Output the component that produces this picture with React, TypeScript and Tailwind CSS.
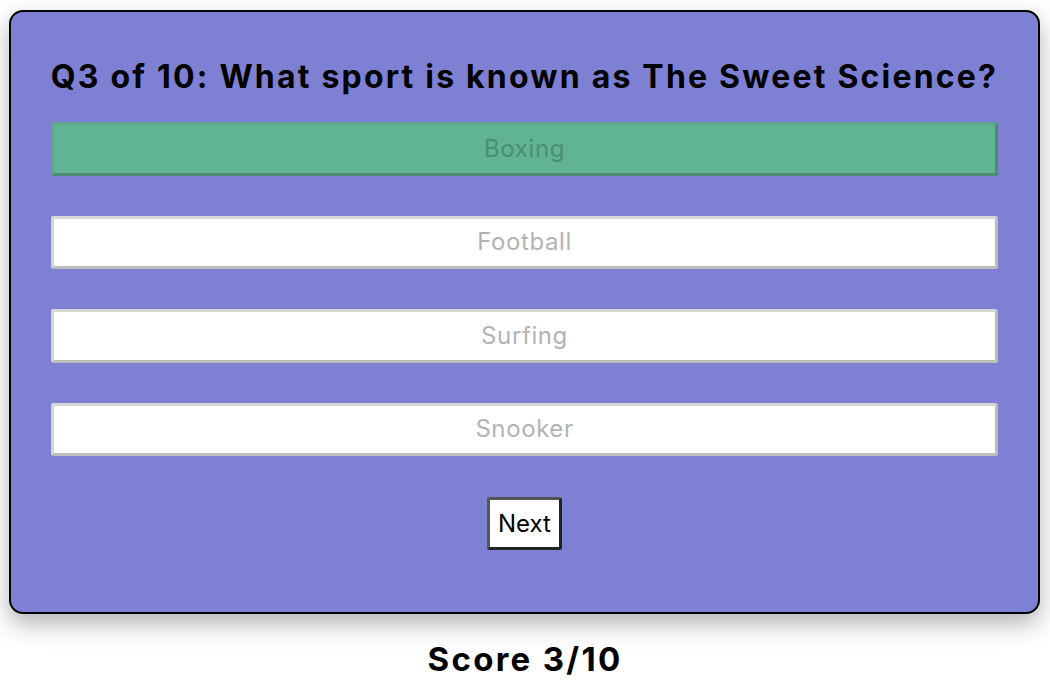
import React from 'react';

const answers = [
  { text: 'Boxing', correct: true },
  { text: 'Football', correct: false },
  { text: 'Surfing', correct: false },
  { text: 'Snooker', correct: false },
];

const AnswerButton = ({ text, correct }: { text: string; correct: boolean }) => (
  <button
    disabled
    className={
      correct
        ? 'h-[53.5px] w-full rounded-[3px] border-[3px] border-t-[#5ea68b] border-l-[#5ea68b] border-b-[#4f8b74] border-r-[#4f8b74] bg-[#60b494] text-[24px] tracking-[0.6px] text-[#4b8e73]'
        : 'h-[53.5px] w-full rounded-[3px] border-[3px] border-t-[#d6d6d6] border-l-[#d6d6d6] border-b-[#bdbdbd] border-r-[#bdbdbd] bg-white text-[24px] tracking-[0.6px] text-[#b3b3b3]'
    }
  >
    {text}
  </button>
);

export default function App() {
  return (
    <div className="min-h-[680px] bg-white font-['Inter',sans-serif]">
      <div className="mr-[10px] ml-[9px] pt-[10px]">
        <div className="flex flex-col items-center rounded-[14px] border-2 border-black bg-[#7e80d3] px-[40px] pt-[45px] pb-[62px] shadow-[0_10px_25px_rgba(0,0,0,0.3)]">
          <h1 className="text-[32px] font-bold leading-[40px] tracking-[2.2px] whitespace-nowrap text-black">
            Q3 of 10: What sport is known as The Sweet Science?
          </h1>
          <div className="mt-[25px] flex w-full flex-col gap-[40px]">
            {answers.map((a) => (
              <AnswerButton key={a.text} text={a.text} correct={a.correct} />
            ))}
          </div>
          <button className="mt-[41px] h-[53px] rounded-[3px] border-[3px] border-t-[#555] border-l-[#555] border-b-[#222] border-r-[#222] bg-white px-[8px] text-[24px] text-black">
            Next
          </button>
        </div>
      </div>
      <div className="mt-[25px] text-center text-[33px] font-bold leading-[40px] tracking-[2.3px] text-black">
        Score 3/10
      </div>
    </div>
  );
}
